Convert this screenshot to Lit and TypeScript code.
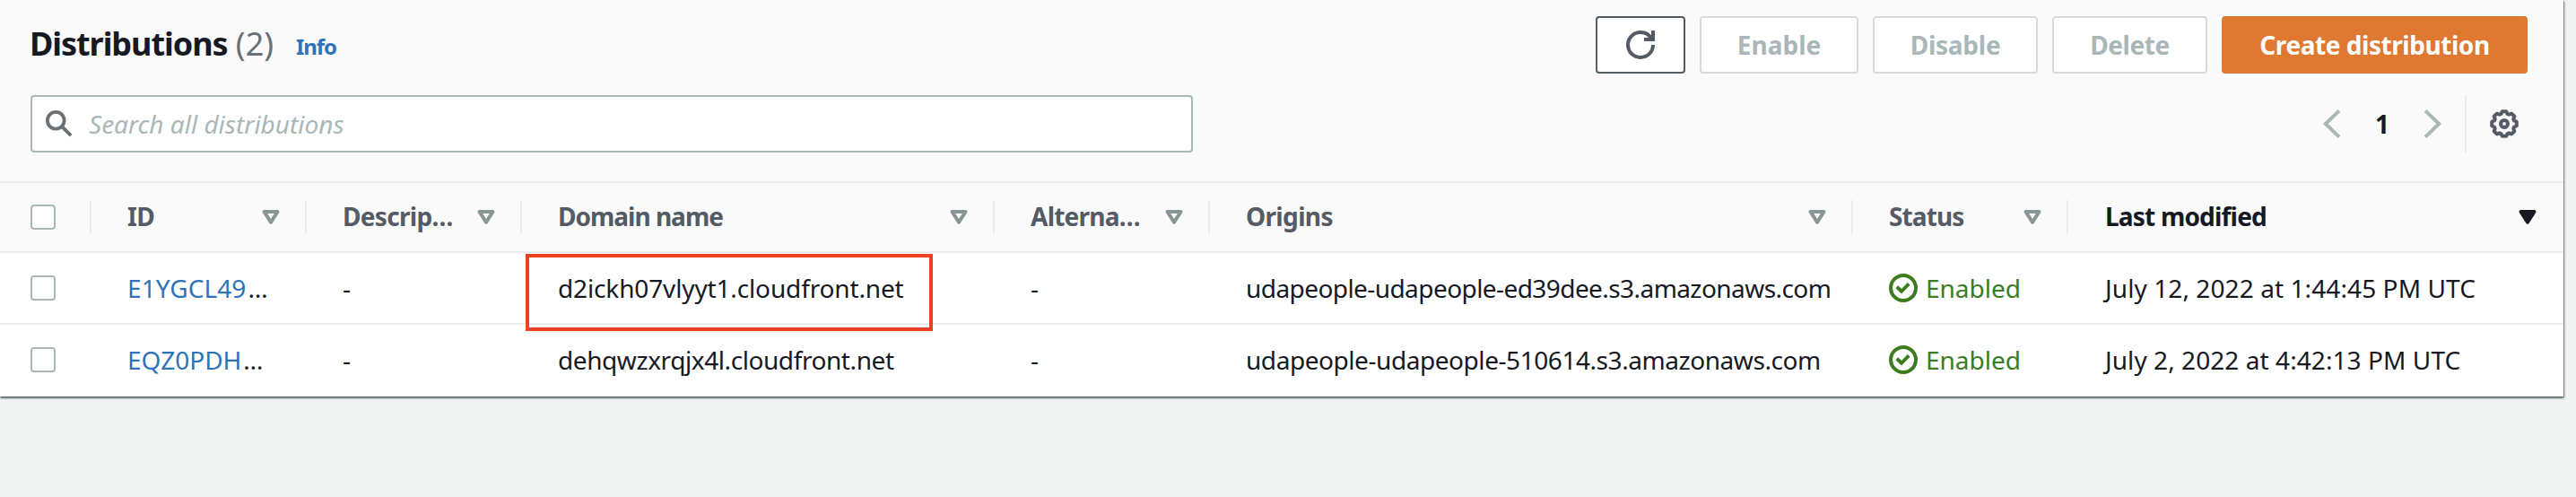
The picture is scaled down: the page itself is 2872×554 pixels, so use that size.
import { LitElement, html, css, svg, nothing } from "lit";
import { customElement } from "lit/decorators.js";

interface Column {
  label: string;
  tracking: number;
  sorted?: boolean;
}

interface Cell {
  text: string;
  tracking: number;
}

interface Distribution {
  id: Cell;
  domain: Cell;
  origin: Cell;
  modified: Cell;
  marked: boolean;
}

const columns: Column[] = [
  { label: "ID", tracking: -0.6 },
  { label: "Descrip…", tracking: -0.7 },
  { label: "Domain name", tracking: -1 },
  { label: "Alterna…", tracking: -0.75 },
  { label: "Origins", tracking: -0.65 },
  { label: "Status", tracking: -0.9 },
  { label: "Last modified", tracking: -0.8, sorted: true },
];

const distributions: Distribution[] = [
  {
    id: { text: "E1YGCL49", tracking: 0.1 },
    domain: { text: "d2ickh07vlyyt1.cloudfront.net", tracking: -0.14 },
    origin: { text: "udapeople-udapeople-ed39dee.s3.amazonaws.com", tracking: -0.57 },
    modified: { text: "July 12, 2022 at 1:44:45 PM UTC", tracking: 0.09 },
    marked: true,
  },
  {
    id: { text: "EQZ0PDH", tracking: 0 },
    domain: { text: "dehqwzxrqjx4l.cloudfront.net", tracking: -0.42 },
    origin: { text: "udapeople-udapeople-510614.s3.amazonaws.com", tracking: -0.44 },
    modified: { text: "July 2, 2022 at 4:42:13 PM UTC", tracking: 0.07 },
    marked: false,
  },
];

const track = (px: number) => `letter-spacing:${px}px`;

// Outline of an eight-toothed cog, centred in a 16-unit box.
const cog = Array.from({ length: 8 }, (_, k) =>
  [[-9, 7], [9, 7], [17.5, 5.8], [27.5, 5.8]].map(([deg, r]) => {
    const a = ((k * 45 + deg) * Math.PI) / 180;
    return `${(8 + r * Math.sin(a)).toFixed(2)},${(8 - r * Math.cos(a)).toFixed(2)}`;
  }).join(" ")
).join(" ");

const icons = {
  search: svg`<circle cx="6" cy="6" r="5"/><path d="m15 15-5.3-5.3"/>`,
  refresh: svg`<path d="M10 5h5V0"/><path d="M15 8a6.957 6.957 0 0 1-7 7 6.957 6.957 0 0 1-7-7 6.957 6.957 0 0 1 7-7 6.87 6.87 0 0 1 6.3 4"/>`,
  left: svg`<path d="M12 .7 4.4 8l7.6 7.3"/>`,
  right: svg`<path d="M4 .7 11.6 8 4 15.3"/>`,
  check: svg`<circle cx="8" cy="8" r="7"/><path d="m4.400 7.400 2.600 2.500 4.100-4.200"/>`,
  gear: svg`<circle cx="8" cy="8" r="2"/><polygon stroke-linejoin="round" points=${cog}/>`,
};

@customElement("app-root")
export class AppRoot extends LitElement {
  static styles = css`
    :host {
      display: block;
      height: 554px;
      background: #f2f3f3;
      font-family: "Noto Sans", "Open Sans", sans-serif;
      font-size: 28px;
      line-height: 44px;
      color: #16191f;
      overflow: hidden;
    }
    * { box-sizing: border-box; }
    .panel {
      width: 2858px;
      height: 442px;
      background: #fff;
      box-shadow: 0 2px 2px 0 rgba(0, 28, 36, 0.5), 2px 2px 2px 0 rgba(0, 28, 36, 0.15), 1px 1px 0 0 #aab7b8;
    }
    .top {
      height: 204px;
      background: #fafafa;
      border-bottom: 2px solid #eaeded;
      padding: 18px 40px 0 34px;
    }
    .bar { display: flex; align-items: center; height: 64px; }
    .tools { margin-top: 24px; justify-content: space-between; }
    h1 { margin: 0 0 0 -1px; font-size: 36px; letter-spacing: -1.05px; padding-bottom: 3px; }
    .count { font-weight: 400; color: #687078; letter-spacing: 0; padding-left: 1px; }
    .info { font-size: 24px; font-weight: 700; color: #2e73b8; letter-spacing: -1.1px; margin-left: 25px; padding-top: 3px; }
    .actions { display: flex; gap: 16px; margin-left: auto; }
    .btn {
      height: 64px;
      border: 2px solid #d5dbdb;
      border-radius: 4px;
      background: #fff;
      color: #aab7b8;
      font-weight: 700;
      display: flex;
      align-items: center;
      justify-content: center;
      padding-bottom: 1px;
    }
    .refresh { width: 100px; border-color: #545b64; color: #545b64; padding: 0; }
    .enable { width: 177px; }
    .disable { width: 184px; }
    .delete { width: 173px; }
    .create { width: 341px; background: #df7830; border-color: #df7830; color: #fff; }
    svg { display: block; width: 32px; height: 32px; fill: none; stroke: currentColor; stroke-width: 2; overflow: visible; flex: none; }
    .search {
      width: 1296px;
      height: 64px;
      border: 2px solid #aab7b8;
      border-radius: 4px;
      background: #fff;
      display: flex;
      align-items: center;
      gap: 17px;
      padding-left: 15px;
      color: #aab7b8;
      font-style: italic;
    }
    .search svg { color: #687078; width: 30px; height: 30px; margin-right: 1px; }
    .pager { display: flex; align-items: center; height: 64px; color: #aab7b8; }
    .page { color: #16191f; font-weight: 700; width: 80px; text-align: center; }
    .split { width: 2px; height: 64px; background: #eaeded; margin: 0 26px 0 20px; }
    .gear { color: #545b64; margin-right: 10px; }
    .row {
      display: grid;
      grid-template-columns: 102px 240px 240px 527px 240px 717px 240px 552px;
      height: 80px;
      align-items: center;
      border-bottom: 2px solid #eaeded;
      white-space: nowrap;
    }
    .row:last-child { border-bottom: 0; padding-bottom: 2px; }
    .head { height: 78px; background: #fafafa; color: #545b64; font-weight: 700; }
    .pick { display: flex; align-items: center; height: 38px; padding-left: 34px; }
    .box { width: 28px; height: 28px; border: 2px solid #aab7b8; border-radius: 4px; background: #fff; }
    .cell { padding-left: 40px; display: flex; align-items: center; min-width: 0; }
    .cell:last-child { padding-left: 41px; }
    .head .pick, .head .cell { border-right: 2px solid #eaeded; height: 38px; }
    .head .cell:last-child { border-right: 0; }
    .label { flex: 1; padding-bottom: 2px; }
    .tri { width: 20px; height: 16px; margin-right: 28px; color: #879596; }
    .sorted { color: #16191f; }
    .sorted .tri { margin-right: 30px; color: #16191f; fill: #16191f; }
    .link { color: #2e73b8; }
    .more { margin-left: 2px; }
    .on { color: #3a7d1e; gap: 9px; }
    .domain { position: relative; }
    .mark {
      position: absolute;
      left: 4px;
      top: -16px;
      width: 454px;
      height: 86px;
      border: 4px solid #ee4023;
      z-index: 1;
    }
  `;

  private icon(shape: unknown, cls = "") {
    return html`<svg class=${cls} viewBox="0 0 16 16" aria-hidden="true">${shape}</svg>`;
  }

  private header(c: Column) {
    return html`<div class="cell ${c.sorted ? "sorted" : ""}">
      <span class="label" style=${track(c.tracking)}>${c.label}</span>
      <svg class="tri" viewBox="0 0 20 16"><path stroke-width="4" stroke-linejoin="round" d="M2.500 2h15L10 13.700Z"/></svg>
    </div>`;
  }

  private row(d: Distribution) {
    return html`<div class="row">
      <div class="pick"><span class="box"></span></div>
      <div class="cell"><span class="link" style=${track(d.id.tracking)}>${d.id.text}</span><span class="more">…</span></div>
      <div class="cell">-</div>
      <div class="cell domain">
        <span style=${track(d.domain.tracking)}>${d.domain.text}</span>
        ${d.marked ? html`<div class="mark"></div>` : nothing}
      </div>
      <div class="cell">-</div>
      <div class="cell"><span style=${track(d.origin.tracking)}>${d.origin.text}</span></div>
      <div class="cell on">${this.icon(icons.check)}<span>Enabled</span></div>
      <div class="cell"><span style=${track(d.modified.tracking)}>${d.modified.text}</span></div>
    </div>`;
  }

  render() {
    return html`<section class="panel">
      <header class="top">
        <div class="bar">
          <h1>Distributions <span class="count">(2)</span></h1>
          <span class="info">Info</span>
          <div class="actions">
            <div class="btn refresh">${this.icon(icons.refresh)}</div>
            <div class="btn enable">Enable</div>
            <div class="btn disable" style=${track(-0.25)}>Disable</div>
            <div class="btn delete" style=${track(-0.4)}>Delete</div>
            <div class="btn create" style=${track(-0.45)}>Create distribution</div>
          </div>
        </div>
        <div class="bar tools">
          <div class="search">${this.icon(icons.search)}<span>Search all distributions</span></div>
          <div class="pager">
            ${this.icon(icons.left)}<span class="page">1</span>${this.icon(icons.right)}
            <span class="split"></span>${this.icon(icons.gear, "gear")}
          </div>
        </div>
      </header>
      <div class="row head">
        <div class="pick"><span class="box"></span></div>
        ${columns.map((c) => this.header(c))}
      </div>
      ${distributions.map((d) => this.row(d))}
    </section>`;
  }
}
